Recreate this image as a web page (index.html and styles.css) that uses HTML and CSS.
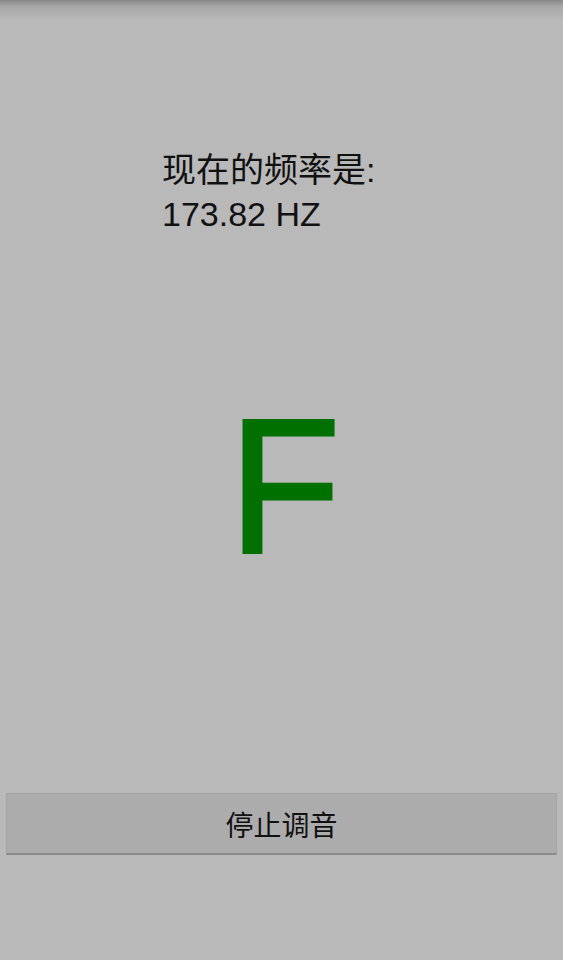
FILE: index.html
```html
<!DOCTYPE html>
<html lang="zh">
<head>
<meta charset="utf-8">
<link rel="stylesheet" href="styles.css">
</head>
<body>
<main class="screen">
  <section class="freq">
    <div class="freq-label">现在的频率是:</div>
    <div class="freq-value">173.82 HZ</div>
  </section>
  <div class="note"><span class="note-letter">F</span></div>
  <button class="stop-btn" type="button">停止调音</button>
</main>
</body>
</html>
```
FILE: styles.css
```css
html, body {
  margin: 0;
  padding: 0;
}
body {
  width: 563px;
  height: 960px;
  background: linear-gradient(#888888 0px, #a6a6a6 6px, #b9b9b9 20px) no-repeat, #b9b9b9;
  font-family: "Liberation Sans", "Noto Sans CJK SC", sans-serif;
  color: #111;
  overflow: hidden;
}
.screen {
  display: flex;
  flex-direction: column;
  height: 960px;
}
.freq {
  margin-top: 148px;
  padding-left: 162px;
  font-size: 34px;
  line-height: 44px;
}
.freq-label, .freq-value {
  height: 44px;
}
.note {
  margin-top: 154px;
  height: 192px;
  padding-left: 6px;
  font-size: 192px;
  line-height: 192px;
  text-align: center;
  color: #007000;
  -webkit-text-stroke: 3px #007000;
}
.note-letter {
  display: inline-block;
  transform: scaleX(0.95);
}
.stop-btn {
  margin: 211px 6px 0;
  height: 62px;
  box-sizing: border-box;
  background: #acacac;
  border: 1px solid #a4a4a4;
  border-bottom: 2px solid #8a8a8a;
  font-family: "Liberation Sans", "Noto Sans CJK SC", sans-serif;
  font-size: 28px;
  color: #111;
  padding: 0;
}
```
